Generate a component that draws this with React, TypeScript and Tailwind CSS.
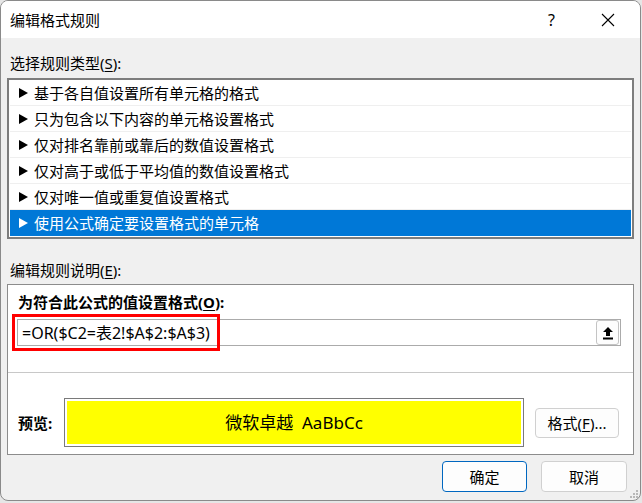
import React from "react";

// ---------------------------------------------------------------------------
// Rule type list
// ---------------------------------------------------------------------------

const RULE_TYPES = [
  "基于各自值设置所有单元格的格式",
  "只为包含以下内容的单元格设置格式",
  "仅对排名靠前或靠后的数值设置格式",
  "仅对高于或低于平均值的数值设置格式",
  "仅对唯一值或重复值设置格式",
  "使用公式确定要设置格式的单元格",
];

const SELECTED = 5;

function Arrow({ light }: { light?: boolean }) {
  return (
    <svg width="9" height="10" viewBox="0 0 9 10" className="shrink-0">
      <polygon points="0,0 9,5 0,10" fill={light ? "#ffffff" : "#000000"} />
    </svg>
  );
}

function RuleRow({ text, selected }: { text: string; selected: boolean }) {
  return (
    <div
      className={
        selected
          ? "mx-[1px] flex h-[26px] items-center gap-[6px] bg-[#0078d7] pl-[9px] text-white"
          : "mx-[1px] flex h-[26px] items-center gap-[6px] border-b border-[#efefef] pl-[9px] text-black"
      }
    >
      <Arrow light={selected} />
      <span className="text-[15px] leading-[20px]">{text}</span>
    </div>
  );
}

function Mnemonic({ k }: { k: string }) {
  return <span className="underline underline-offset-2">{k}</span>;
}

// ---------------------------------------------------------------------------
// Dialog
// ---------------------------------------------------------------------------

export default function App() {
  return (
    <div className="h-[503px] w-[642px] bg-[#e6e6e6] font-['Noto_Sans','Noto_Sans_CJK_SC',sans-serif] text-black">
      <div className="relative flex h-[501px] w-[641px] flex-col overflow-hidden rounded-[8px] border border-[#8a8a8a] bg-[#f0f0f0]">
        {/* Title bar */}
        <div className="flex h-[37px] items-center bg-white pl-[9px]">
          <span className="text-[15px] leading-[20px]">编辑格式规则</span>
          <div className="ml-auto flex items-center">
            <span className="mr-[46px] text-[16px] leading-[20px]">?</span>
            <svg width="14" height="14" viewBox="0 0 14 14" className="mr-[25px]">
              <path d="M1 1 L13 13 M13 1 L1 13" stroke="#000" strokeWidth="1.1" />
            </svg>
          </div>
        </div>

        <div className="flex flex-1 flex-col px-[6px]">
          <div className="pl-[3px] pt-[15px] pb-[5px] text-[15px] leading-[20px]">
            选择规则类型(<Mnemonic k="S" />):
          </div>

          {/* Rule type list */}
          <div className="h-[161px] border-2 border-[#7d7d7d] bg-white">
            {RULE_TYPES.map((t, i) => (
              <RuleRow key={t} text={t} selected={i === SELECTED} />
            ))}
          </div>

          <div className="pl-[3px] pt-[21px] pb-[4px] text-[15px] leading-[20px]">
            编辑规则说明(<Mnemonic k="E" />):
          </div>

          {/* Rule description panel */}
          <div className="flex h-[171px] flex-col border border-[#8c8c8c] bg-white">
            <div className="pl-[10px] pt-[7px] text-[15px] font-bold leading-[20px]">
              为符合此公式的值设置格式(<Mnemonic k="O" />):
            </div>

            <div className="relative mt-[7px] ml-[9px] mr-[12px]">
              <div className="flex h-[27px] items-center border border-[#ababab] bg-white pl-[4px] pr-[1px]">
                <span className="text-[16px] leading-[20px]">=OR($C2=表2!$A$2:$A$3)</span>
                <button className="ml-auto flex h-[25px] w-[23px] items-center justify-center rounded-[3px] border border-[#c4c4c4] bg-[#fdfdfd]">
                  <svg width="12" height="14" viewBox="0 0 12 14">
                    <path d="M6 1 L11 6 L8 6 L8 10 L4 10 L4 6 L1 6 Z" fill="#000" />
                    <rect x="1" y="11.5" width="10" height="2" fill="#000" />
                  </svg>
                </button>
              </div>
              {/* highlight over the formula */}
              <div className="absolute left-[-5px] top-[-5px] h-[37px] w-[208px] border-[3px] border-[#ff0000]" />
            </div>

            <div className="mt-[26px] h-px bg-[#c8c8c8]" />

            <div className="mt-[25px] flex items-center pl-[10px]">
              <span className="w-[46px] text-[15px] font-bold leading-[20px]">预览:</span>
              <div className="h-[49px] w-[460px] border border-[#7a7a7a] bg-white p-[2px]">
                <div className="flex h-full items-center justify-center bg-[#ffff00] text-[17px] leading-[22px]">
                  微软卓越&nbsp;&nbsp;AaBbCc
                </div>
              </div>
              <button className="ml-[11px] h-[30px] w-[84px] rounded-[4px] border border-[#d0d0d0] bg-[#fdfdfd] text-[15px] leading-[20px]">
                格式(<Mnemonic k="F" />)...
              </button>
            </div>
          </div>

          {/* OK / Cancel */}
          <div className="mt-[6px] flex justify-end gap-[14px] pr-[7px]">
            <button className="h-[31px] w-[85px] rounded-[4px] border border-[#0067c0] bg-[#fdfdfd] text-[15px] leading-[20px]">
              确定
            </button>
            <button className="h-[31px] w-[86px] rounded-[4px] border border-[#d0d0d0] bg-[#fdfdfd] text-[15px] leading-[20px]">
              取消
            </button>
          </div>
        </div>

        {/* size grip */}
        <svg width="10" height="10" viewBox="0 0 10 10" className="absolute bottom-[1px] right-[1px]">
          <rect x="7" y="1" width="2" height="2" fill="#b8b8b8" />
          <rect x="4" y="4" width="2" height="2" fill="#b8b8b8" />
          <rect x="7" y="4" width="2" height="2" fill="#b8b8b8" />
          <rect x="1" y="7" width="2" height="2" fill="#b8b8b8" />
          <rect x="4" y="7" width="2" height="2" fill="#b8b8b8" />
          <rect x="7" y="7" width="2" height="2" fill="#b8b8b8" />
        </svg>
      </div>
    </div>
  );
}
